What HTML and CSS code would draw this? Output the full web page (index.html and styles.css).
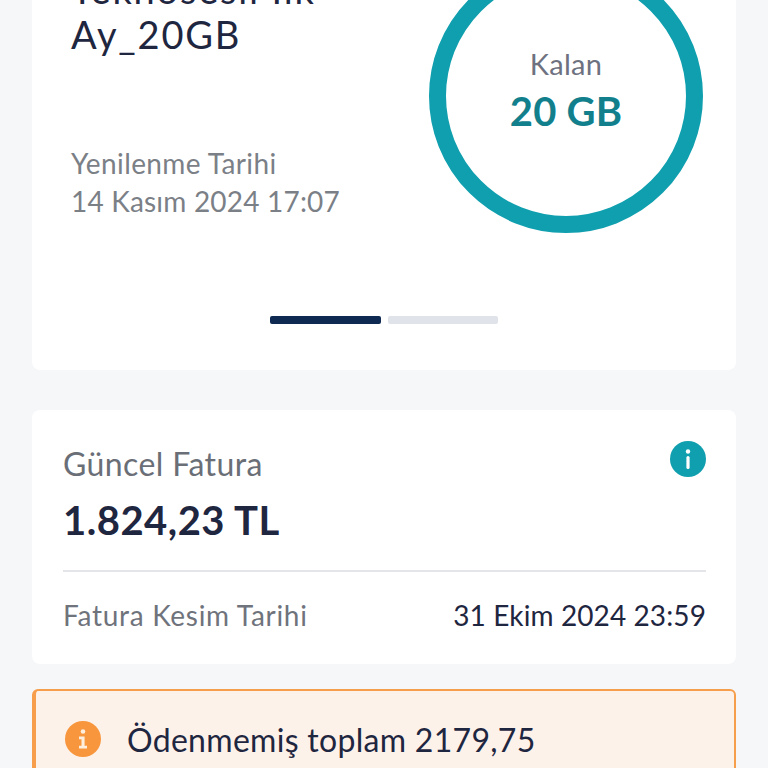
FILE: index.html
```html
<!DOCTYPE html>
<html lang="tr">
<head>
    <meta charset="UTF-8">
    <meta name="viewport" content="width=device-width, initial-scale=1.0">
    <title>Hesabım</title>
    <link rel="stylesheet" href="styles.css">
</head>
<body>
    <div class="page">
        <section class="card usage-card">
            <div class="usage-row">
                <div class="usage-info">
                    <h2 class="package-name">Teknosesli İlk Ay_20GB</h2>
                    <p class="renew-label">Yenilenme Tarihi</p>
                    <p class="renew-date">14 Kasım 2024 17:07</p>
                </div>
                <div class="ring">
                    <span class="ring-label">Kalan</span>
                    <span class="ring-value">20 GB</span>
                </div>
            </div>
            <div class="pager">
                <span class="pager-dot active"></span>
                <span class="pager-dot"></span>
            </div>
        </section>

        <section class="card bill-card">
            <div class="bill-head">
                <div>
                    <p class="bill-label">Güncel Fatura</p>
                    <p class="bill-amount">1.824,23 TL</p>
                </div>
                <svg class="info-icon" viewBox="0 0 36 36" width="36" height="36">
                    <circle cx="18" cy="18" r="18" fill="#0f9fae"/>
                    <circle cx="18" cy="10.5" r="2.2" fill="#fff"/>
                    <rect x="16.4" y="15" width="3.2" height="13" rx="1.6" fill="#fff"/>
                </svg>
            </div>
            <div class="bill-foot">
                <span class="cut-label">Fatura Kesim Tarihi</span>
                <span class="cut-date">31 Ekim 2024 23:59</span>
            </div>
        </section>

        <section class="warning">
            <svg class="warn-icon" viewBox="0 0 36 36" width="36" height="36">
                <circle cx="18" cy="18" r="18" fill="#f7963c"/>
                <circle cx="18" cy="10.5" r="2.3" fill="#fdeedd"/>
                <path d="M14 15.5h5.6v9.3H22v2.7h-8v-2.7h2.5v-6.6H14z" fill="#fdeedd"/>
            </svg>
            <p class="warn-text">Ödenmemiş toplam 2179,75</p>
        </section>
    </div>
</body>
</html>
```

FILE: styles.css
```css
html, body {
    height: 768px;
    margin: 0;
    overflow: hidden;
}
body {
    background-color: #f6f7f9;
    font-family: "Lato", "Open Sans", sans-serif;
    color: #1f2640;
}
p, h2 {
    margin: 0;
    font-weight: normal;
}
.page {
    display: flex;
    flex-direction: column;
    padding: 0 32px;
    margin-top: -40px;
}
.card {
    background-color: #fff;
    border-radius: 8px;
}

/* paket karti */
.usage-card {
    height: 410px;
    margin-bottom: 40px;
}
.usage-row {
    display: flex;
    justify-content: space-between;
    height: 356px;
}
.usage-info {
    padding: 7px 0 0 39px;
}
.package-name {
    width: 300px;
    height: 177px;
    font-size: 38px;
    line-height: 45px;
    letter-spacing: 1.8px;
}
.renew-label, .renew-date {
    font-size: 28px;
    line-height: 38px;
    letter-spacing: 0.4px;
    color: #7b8087;
}
.renew-date {
    letter-spacing: 0.2px;
}
.ring {
    box-sizing: border-box;
    flex-shrink: 0;
    width: 274px;
    height: 274px;
    margin: -1px 33px 0 0;
    border: 17px solid #0f9fae;
    border-radius: 50%;
    display: flex;
    flex-direction: column;
    align-items: center;
    justify-content: center;
    padding-bottom: 12px;
}
.ring-label {
    font-size: 29px;
    line-height: 38px;
    letter-spacing: 0.3px;
    color: #6e7280;
}
.ring-value {
    margin-top: 3px;
    font-size: 40px;
    line-height: 50px;
    letter-spacing: 0.2px;
    font-weight: bold;
    color: #12808c;
}
.pager {
    display: flex;
    justify-content: center;
    gap: 7px;
}
.pager-dot {
    width: 110px;
    height: 8px;
    border-radius: 2px;
    background-color: #e1e3ea;
}
.pager-dot.active {
    width: 111px;
    background-color: #0e2a52;
}

/* fatura karti */
.bill-card {
    box-sizing: border-box;
    height: 254px;
    padding: 32px 30px 0 31px;
    margin-bottom: 25px;
}
.bill-head {
    display: flex;
    justify-content: space-between;
    height: 128px;
    border-bottom: 2px solid #e3e5e9;
}
.bill-label {
    font-size: 32px;
    line-height: 44px;
    letter-spacing: 0.4px;
    color: #6a6e76;
}
.bill-amount {
    margin-top: 9px;
    font-size: 40px;
    line-height: 50px;
    letter-spacing: 0.5px;
    font-weight: bold;
}
.info-icon {
    margin-top: -1px;
}
.bill-foot {
    display: flex;
    justify-content: space-between;
    align-items: center;
    height: 86px;
    font-size: 28px;
}
.cut-label {
    letter-spacing: 0.7px;
    color: #6f737c;
}
.cut-date {
    letter-spacing: 0.1px;
}

/* uyari */
.warning {
    display: flex;
    align-items: center;
    gap: 26px;
    height: 200px;
    box-sizing: border-box;
    padding: 0 0 100px 29px;
    background-color: #fdf2ea;
    border: 2px solid #f79e4c;
    border-left-width: 4px;
    border-radius: 6px;
}
.warn-text {
    font-size: 32px;
    letter-spacing: 0.3px;
}
```
